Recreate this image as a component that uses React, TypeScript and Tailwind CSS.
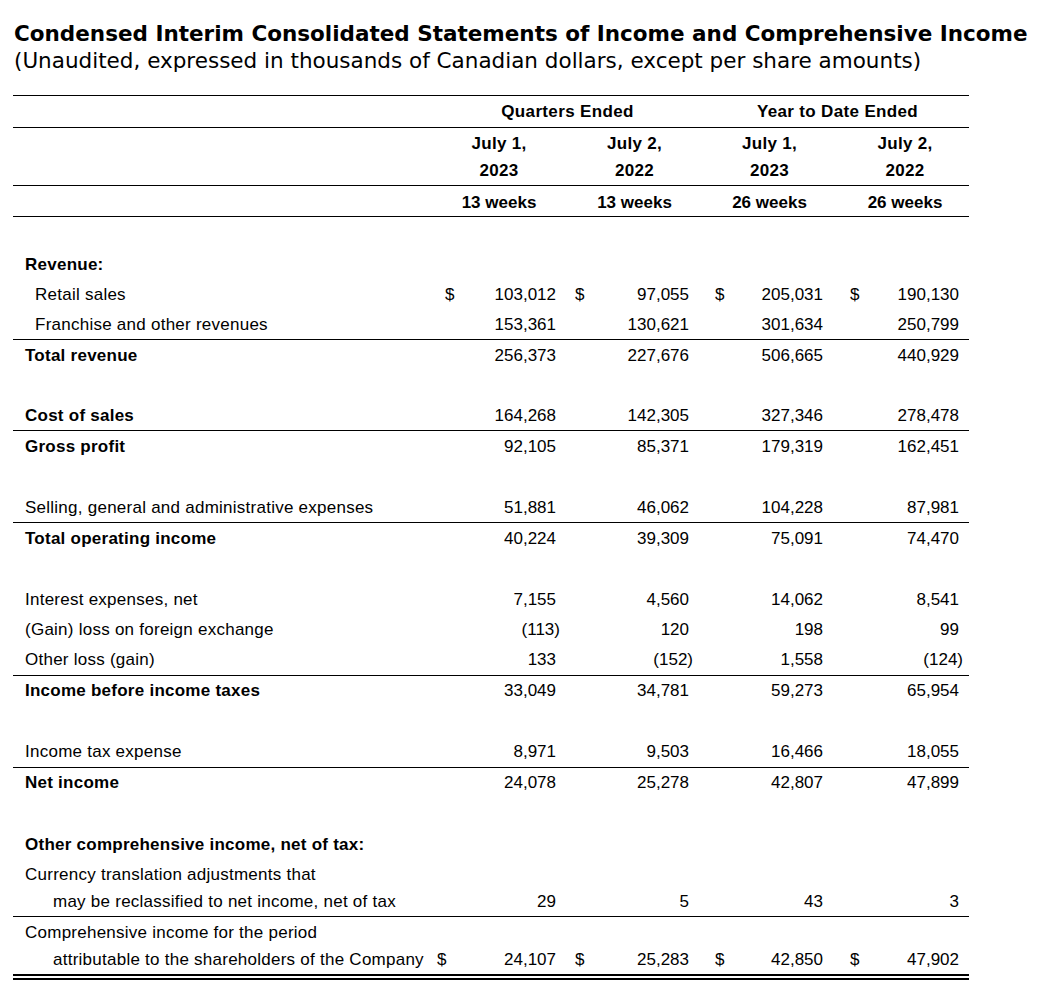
type Row = {
  label?: string;
  label2?: string;
  indent?: number;
  bold?: boolean;
  vals?: string[];
  dollar?: boolean;
  h: string;
  line?: "single" | "double";
};

const rows: Row[] = [
  { label: "Revenue:", bold: true, h: "h-[31px]" },
  { label: "Retail sales", indent: 1, dollar: true, vals: ["103,012", "97,055", "205,031", "190,130"], h: "h-[30px]" },
  { label: "Franchise and other revenues", indent: 1, vals: ["153,361", "130,621", "301,634", "250,799"], h: "h-[30px]", line: "single" },
  { label: "Total revenue", bold: true, vals: ["256,373", "227,676", "506,665", "440,929"], h: "h-[31px]" },
  { h: "h-[30px]" },
  { label: "Cost of sales", bold: true, vals: ["164,268", "142,305", "327,346", "278,478"], h: "h-[30px]", line: "single" },
  { label: "Gross profit", bold: true, vals: ["92,105", "85,371", "179,319", "162,451"], h: "h-[31px]" },
  { h: "h-[31px]" },
  { label: "Selling, general and administrative expenses", vals: ["51,881", "46,062", "104,228", "87,981"], h: "h-[30px]", line: "single" },
  { label: "Total operating income", bold: true, vals: ["40,224", "39,309", "75,091", "74,470"], h: "h-[31px]" },
  { h: "h-[30px]" },
  { label: "Interest expenses, net", vals: ["7,155", "4,560", "14,062", "8,541"], h: "h-[31px]" },
  { label: "(Gain) loss on foreign exchange", vals: ["(113)", "120", "198", "99"], h: "h-[30px]" },
  { label: "Other loss (gain)", vals: ["133", "(152)", "1,558", "(124)"], h: "h-[31px]", line: "single" },
  { label: "Income before income taxes", bold: true, vals: ["33,049", "34,781", "59,273", "65,954"], h: "h-[30px]" },
  { h: "h-[31px]" },
  { label: "Income tax expense", vals: ["8,971", "9,503", "16,466", "18,055"], h: "h-[31px]", line: "single" },
  { label: "Net income", bold: true, vals: ["24,078", "25,278", "42,807", "47,899"], h: "h-[30px]" },
  { h: "h-[31px]" },
  { label: "Other comprehensive income, net of tax:", bold: true, h: "h-[31px]" },
  { label: "Currency translation adjustments that", label2: "may be reclassified to net income, net of tax", vals: ["29", "5", "43", "3"], h: "h-[57px]", line: "single" },
  { label: "Comprehensive income for the period", label2: "attributable to the shareholders of the Company", dollar: true, vals: ["24,107", "25,283", "42,850", "47,902"], h: "h-[63px]", line: "double" },
];

// value columns: width + padding so "$" and figures land where the statement puts them
const cols = [
  "w-[128px] pl-2 pr-[9px]",
  "w-[133px] pl-[10px] pr-[9px]",
  "w-[135px] pl-[17px] pr-[10px]",
  "w-[136px] pl-[17px] pr-[10px]",
];
// last row: the first "$" sits right after the label
const lastCol0 = "w-[128px] pl-0 pr-[9px]";

const Figure = ({ v }: { v: string }) => {
  if (v.startsWith("(")) {
    return <span className="-mr-[4px]">{v}</span>;
  }
  return <span>{v}</span>;
};

const StatementRow = ({ row, last }: { row: Row; last: boolean }) => {
  const border =
    row.line === "single"
      ? "border-b border-black"
      : row.line === "double"
        ? "border-b-[6px] border-double border-black"
        : "";
  const twoLine = !!row.label2;
  return (
    <div className={`flex ${row.h} ${border}`}>
      <div
        className={`w-[424px] flex items-center tracking-[0.25px] ${row.bold ? "font-bold" : ""} ${row.indent ? "pl-[22px]" : "pl-3"}`}
      >
        {twoLine ? (
          <div className="leading-[27px]">
            <div>{row.label}</div>
            <div className="pl-[28px]">{row.label2}</div>
          </div>
        ) : (
          row.label
        )}
      </div>
      {row.vals &&
        row.vals.map((v, i) => (
          <div
            key={i}
            className={`flex justify-between ${last && i === 0 ? lastCol0 : cols[i]} ${twoLine ? "items-end pb-[1px] leading-[27px]" : "items-center"}`}
          >
            <span>{row.dollar ? "$" : ""}</span>
            <Figure v={v} />
          </div>
        ))}
    </div>
  );
};

export default function App() {
  return (
    <div className="bg-white min-h-[981px] text-black">
      <div className="pl-[14px] pt-[20px] font-['DejaVu_Sans',Verdana,sans-serif] text-[21.5px] leading-[27px]">
        <h1 className="font-bold">Condensed Interim Consolidated Statements of Income and Comprehensive Income</h1>
        <p>(Unaudited, expressed in thousands of Canadian dollars, except per share amounts)</p>
      </div>

      <div className="ml-[13px] mt-[21px] w-[956px] font-['Liberation_Sans',Arial,sans-serif] text-[17px]">
        {/* column headings */}
        <div className="border-t border-black font-bold">
          <div className="flex h-[32px] border-b border-black tracking-[0.35px]">
            <div className="w-[424px]" />
            <div className="w-[261px] flex items-center justify-center">Quarters Ended</div>
            <div className="w-[271px] flex items-center justify-center pl-2">Year to Date Ended</div>
          </div>
          <div className="flex h-[58px] border-b border-black tracking-[0.3px]">
            <div className="w-[424px]" />
            {[
              ["July 1,", "2023", "w-[128px] pr-[4px]"],
              ["July 2,", "2022", "w-[133px] pl-[6px]"],
              ["July 1,", "2023", "w-[135px] pl-2"],
              ["July 2,", "2022", "w-[136px] pl-2"],
            ].map(([a, b, c], i) => (
              <div key={i} className={`${c} flex flex-col items-center justify-center leading-[27px]`}>
                <div>{a}</div>
                <div>{b}</div>
              </div>
            ))}
          </div>
          <div className="flex h-[31px] border-b border-black">
            <div className="w-[424px]" />
            {[
              ["13 weeks", "w-[128px] pr-[4px]"],
              ["13 weeks", "w-[133px] pl-[6px]"],
              ["26 weeks", "w-[135px] pl-2"],
              ["26 weeks", "w-[136px] pl-2"],
            ].map(([a, c], i) => (
              <div key={i} className={`${c} flex items-center justify-center pt-[3px]`}>
                {a}
              </div>
            ))}
          </div>
        </div>

        <div className="h-[32px]" />

        {rows.map((r, i) => (
          <StatementRow key={i} row={r} last={i === rows.length - 1} />
        ))}
      </div>
    </div>
  );
}
